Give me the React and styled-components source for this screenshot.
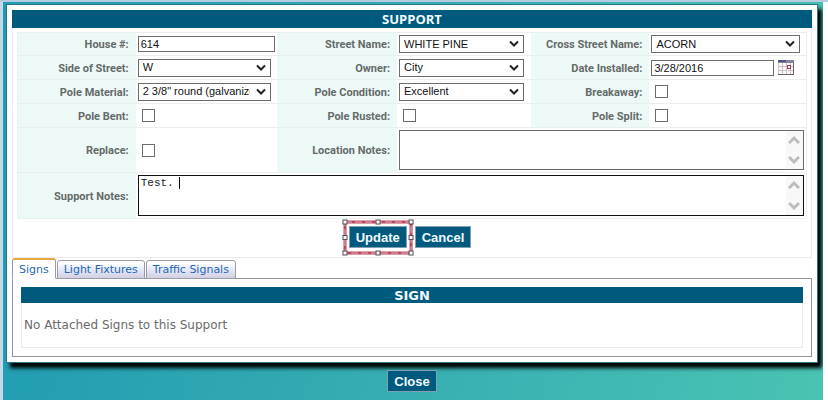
import React from 'react'
import styled, { createGlobalStyle } from 'styled-components'

const GlobalStyle = createGlobalStyle`
  * {
    box-sizing: border-box;
  }
  body {
    margin: 0;
    background: #fff;
    font-family: 'Open Sans', 'Noto Sans', sans-serif;
    color: #656b69;
  }
`

const Page = styled.div`
  border-top: 2px solid #b6cbe1;
`

const Backdrop = styled.main`
  margin-right: 5px;
  padding: 2px 5px 8px 3px;
  border-left: 3px solid #c3d9e8;
  background: linear-gradient(100deg, #1f9bb2 0%, #33abb2 45%, #4ac3b3 100%);
  overflow: hidden;
`

const Dialog = styled.section`
  padding: 5px 5px 5px;
  border: 1px solid #2b7585;
  background: #fff;
  box-shadow: 4px 5px 4px #000;
`

const Title = styled.h1`
  margin: 0;
  height: 18px;
  background: #005a7e;
  color: #f2fbff;
  font-size: 13px;
  font-weight: 700;
  line-height: 18px;
  text-align: center;
`

const Form = styled.form`
  padding: 4px 4px 4px;
  border: 1px solid #ececec;
  border-top: none;
`

const Fields = styled.div`
  display: grid;
  grid-template-columns: 118fr 142fr 120fr 134fr 119fr 157fr;
  grid-template-rows: 23px 24px 24px 24px 45px 46px;
  border: 1px solid #eaf0ef;
  border-bottom: none;
`

const Label = styled.label`
  display: flex;
  align-items: center;
  justify-content: flex-end;
  padding: 2px 7px 0 0;
  border-bottom: 1px solid #e6f1ef;
  background: #edf9f7;
  font-family: Roboto, 'Noto Sans', sans-serif;
  font-size: 11px;
  font-weight: 700;
  line-height: 16px;
  white-space: nowrap;
`

const Cell = styled.div`
  display: flex;
  align-items: center;
  gap: 4px;
  grid-column: span ${(p) => p.$span || 1};
  padding: 0 2px;
  border-bottom: 1px solid #ededed;
  min-width: 0;
`

const Input = styled.input`
  width: ${(p) => p.$width}px;
  height: 16px;
  padding: 0 2px;
  border: 1px solid #6b6b6b;
  background: #fff;
  color: #111;
  font: 11px 'Liberation Sans', Arial, sans-serif;
`

const SelectBox = styled.div`
  position: relative;
  display: flex;
  width: ${(p) => p.$width}px;

  svg {
    position: absolute;
    top: 5px;
    right: 5px;
    pointer-events: none;
  }
`

const NativeSelect = styled.select`
  appearance: none;
  width: 100%;
  height: 18px;
  padding: 0 20px 1px 4px;
  border: 1px solid #6b6b6b;
  border-radius: 0;
  background: #fff;
  color: #111;
  font: 11px 'Liberation Sans', Arial, sans-serif;
`

const Check = styled.input`
  appearance: none;
  width: 13px;
  height: 13px;
  margin: 0 4px;
  border: 1px solid #6b6b6b;
  background: #fff;

  &:checked {
    background: #005a7e;
  }
`

const NotesBox = styled.div`
  position: relative;
  display: flex;
  flex: 1;
`

const TextArea = styled.textarea`
  flex: 1;
  width: 100%;
  height: ${(p) => (p.$active ? 41 : 40)}px;
  padding: 1px 18px 1px 2px;
  border: 1px solid ${(p) => (p.$active ? '#111' : '#6b6b6b')};
  outline: none;
  resize: none;
  overflow: hidden;
  color: #222;
  caret-color: transparent;
  font: 11px/13px 'Liberation Mono', 'Courier New', monospace;
`

const ScrollBar = styled.div`
  position: absolute;
  top: 1px;
  right: 1px;
  bottom: 1px;
  width: 17px;
  display: flex;
  flex-direction: column;
  align-items: center;
  justify-content: space-between;
  padding: 4px 0;
  background: #f8f8f8;
`

const Caret = styled.span`
  position: absolute;
  top: 2px;
  left: 41px;
  width: 1px;
  height: 12px;
  background: #000;
`

const IconButton = styled.button`
  display: flex;
  padding: 0;
  border: none;
  background: none;
`

const Actions = styled.div`
  display: flex;
  align-items: center;
  justify-content: center;
  gap: 8px;
  padding: 7px 4px 5px 0;
`

const Button = styled.button`
  height: 22px;
  padding: 0 6px;
  border: 1px solid #7fa0b3;
  background: #005a7e;
  color: #f2fbff;
  font: bold 13px 'Liberation Sans', Arial, sans-serif;
`

const Selection = styled.div`
  position: relative;
  display: flex;
`

const Marquee = styled.svg`
  position: absolute;
  top: -4px;
  left: -4px;
  width: calc(100% + 8px);
  height: calc(100% + 9px);
  overflow: visible;
  pointer-events: none;
`

const Tabs = styled.div`
  display: flex;
  align-items: flex-end;
  gap: 1px;
  margin-bottom: -1px;
`

const Tab = styled.button`
  position: relative;
  height: ${(p) => (p.$active ? 21 : 19)}px;
  padding: 0 6px;
  border: 1px solid #9a9ca6;
  border-top: ${(p) => (p.$active ? '2px solid #e9a63c' : '1px solid #9a9ca6')};
  border-bottom-color: ${(p) => (p.$active ? '#fff' : '#9a9ca6')};
  border-radius: 3px 3px 0 0;
  background: ${(p) =>
    p.$active ? '#fff' : 'linear-gradient(#fff 10%, #e2e6f8 55%, #d3cfe2)'};
  color: #2767b0;
  font: 11px 'DejaVu Sans', Verdana, sans-serif;
  white-space: nowrap;
`

const TabPanel = styled.div`
  padding: 8px;
  border: 1px solid #93969c;
`

const SubTitle = styled.h2`
  margin: 0;
  height: 16px;
  background: #005a7e;
  color: #f2fbff;
  font: bold 13px/17px 'DejaVu Sans', Verdana, sans-serif;
  text-align: center;
`

const Empty = styled.p`
  margin: 0;
  padding: 14px 2px;
  border: 1px solid #ececec;
  border-top: none;
  color: #6a6a6a;
  font: 12px/16px 'DejaVu Sans', Verdana, sans-serif;
`

const Footer = styled.footer`
  display: flex;
  justify-content: center;
  padding-top: 7px;
`

function Select({ id, width, value }) {
  return (
    <SelectBox $width={width}>
      <NativeSelect id={id} defaultValue={value}>
        <option>{value}</option>
      </NativeSelect>
      <svg width="10" height="8" viewBox="0 0 10 8">
        <path d="M1 1.5 L5 5.5 L9 1.5" fill="none" stroke="#222" strokeWidth="2" />
      </svg>
    </SelectBox>
  )
}

function Notes({ id, active, value }) {
  return (
    <NotesBox>
      <TextArea id={id} $active={active} defaultValue={value} />
      {active && <Caret />}
      <ScrollBar>
        <svg width="12" height="10" viewBox="0 0 12 10">
          <path d="M1 8 L6 3 L11 8" fill="none" stroke="#bdbdbd" strokeWidth="3" />
        </svg>
        <svg width="12" height="10" viewBox="0 0 12 10">
          <path d="M1 2 L6 7 L11 2" fill="none" stroke="#bdbdbd" strokeWidth="3" />
        </svg>
      </ScrollBar>
    </NotesBox>
  )
}

function CalendarIcon() {
  return (
    <svg width="16" height="15" viewBox="0 0 16 15" shapeRendering="crispEdges">
      <rect width="16" height="15" fill="#fbf8f8" />
      <path
        d="M0.5 3V15M4.5 3V15M8.5 3V15M12.5 3V15M0 6.5H15M0 10.5H15"
        stroke="#c9c2c4"
      />
      <path d="M0 14.5H16M15.5 2V15" stroke="#6d5f65" />
      <rect width="16" height="3" fill="#8184a4" />
      <rect width="8" height="2" fill="#50557f" />
      <rect x="9.5" y="5.5" width="3" height="3" fill="#fff" stroke="#a03a52" />
    </svg>
  )
}

const handles = [
  ['0%', '0%'],
  ['50%', '0%'],
  ['100%', '0%'],
  ['0%', '50%'],
  ['100%', '50%'],
  ['0%', '100%'],
  ['50%', '100%'],
  ['100%', '100%'],
]

function SelectionMarquee() {
  return (
    <Marquee>
      <rect width="100%" height="100%" fill="none" stroke="#bd4459" strokeWidth="3" />
      <rect
        width="100%"
        height="100%"
        fill="none"
        stroke="#dcb6cf"
        strokeDasharray="7 3"
      />
      {handles.map(([x, y]) => (
        <svg key={x + y} x={x} y={y} overflow="visible">
          <rect x="-2" y="-2" width="4" height="4" fill="#fff" stroke="#574a52" />
        </svg>
      ))}
    </Marquee>
  )
}

export default function App() {
  return (
    <Page>
      <GlobalStyle />
      <Backdrop>
        <Dialog>
          <Title>SUPPORT</Title>
          <Form onSubmit={(e) => e.preventDefault()}>
            <Fields>
              <Label htmlFor="house">House #:</Label>
              <Cell>
                <Input id="house" $width={137} defaultValue="614" />
              </Cell>
              <Label htmlFor="street">Street Name:</Label>
              <Cell>
                <Select id="street" width={125} value="WHITE PINE" />
              </Cell>
              <Label htmlFor="cross">Cross Street Name:</Label>
              <Cell>
                <Select id="cross" width={149} value="ACORN" />
              </Cell>

              <Label htmlFor="side">Side of Street:</Label>
              <Cell>
                <Select id="side" width={133} value="W" />
              </Cell>
              <Label htmlFor="owner">Owner:</Label>
              <Cell>
                <Select id="owner" width={125} value="City" />
              </Cell>
              <Label htmlFor="installed">Date Installed:</Label>
              <Cell>
                <Input id="installed" $width={123} defaultValue="3/28/2016" />
                <IconButton type="button" aria-label="Pick a date">
                  <CalendarIcon />
                </IconButton>
              </Cell>

              <Label htmlFor="material">Pole Material:</Label>
              <Cell>
                <Select id="material" width={133} value={'2 3/8" round (galvanized)'} />
              </Cell>
              <Label htmlFor="condition">Pole Condition:</Label>
              <Cell>
                <Select id="condition" width={125} value="Excellent" />
              </Cell>
              <Label htmlFor="breakaway">Breakaway:</Label>
              <Cell>
                <Check type="checkbox" id="breakaway" />
              </Cell>

              <Label htmlFor="bent">Pole Bent:</Label>
              <Cell>
                <Check type="checkbox" id="bent" />
              </Cell>
              <Label htmlFor="rusted">Pole Rusted:</Label>
              <Cell>
                <Check type="checkbox" id="rusted" />
              </Cell>
              <Label htmlFor="split">Pole Split:</Label>
              <Cell>
                <Check type="checkbox" id="split" />
              </Cell>

              <Label htmlFor="replace">Replace:</Label>
              <Cell>
                <Check type="checkbox" id="replace" />
              </Cell>
              <Label htmlFor="location">Location Notes:</Label>
              <Cell $span={3}>
                <Notes id="location" />
              </Cell>

              <Label htmlFor="notes">Support Notes:</Label>
              <Cell $span={5}>
                <Notes id="notes" active value="Test. " />
              </Cell>
            </Fields>
            <Actions>
              <Selection>
                <Button type="submit">Update</Button>
                <SelectionMarquee />
              </Selection>
              <Button type="button">Cancel</Button>
            </Actions>
          </Form>
          <Tabs role="tablist">
            <Tab role="tab" aria-selected="true" $active>
              Signs
            </Tab>
            <Tab role="tab" aria-selected="false">
              Light Fixtures
            </Tab>
            <Tab role="tab" aria-selected="false">
              Traffic Signals
            </Tab>
          </Tabs>
          <TabPanel role="tabpanel">
            <SubTitle>SIGN</SubTitle>
            <Empty>No Attached Signs to this Support</Empty>
          </TabPanel>
        </Dialog>
        <Footer>
          <Button type="button">Close</Button>
        </Footer>
      </Backdrop>
    </Page>
  )
}
